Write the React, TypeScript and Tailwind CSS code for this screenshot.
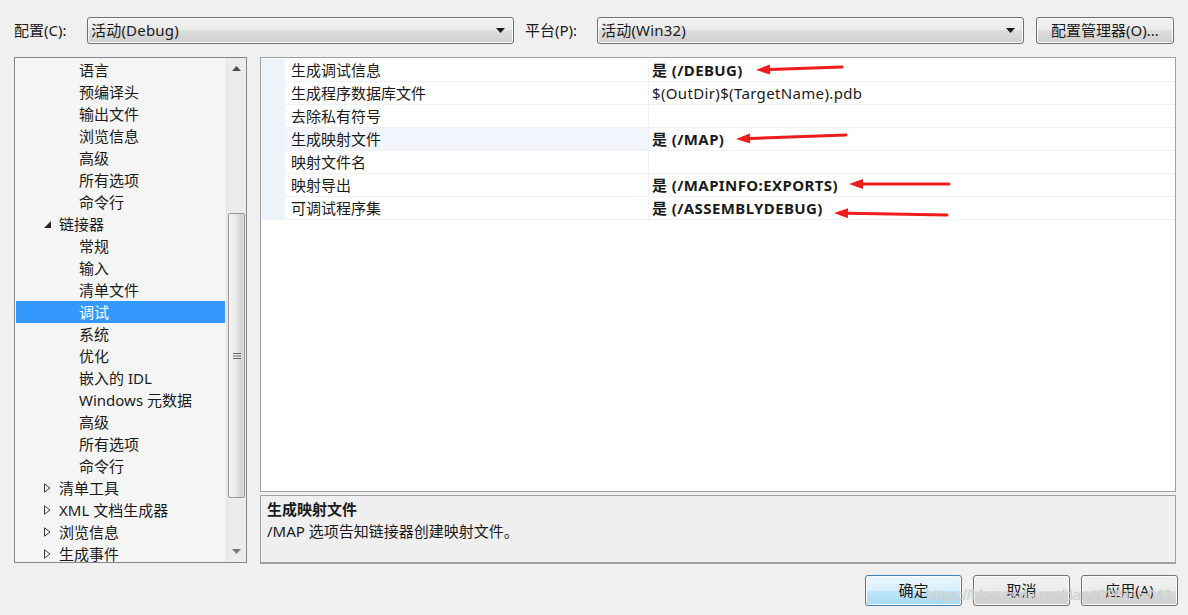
import React from "react";

type Node = { t: string; l: 1 | 2; s?: "open" | "closed"; sel?: boolean };

const tree: Node[] = [
  { t: "语言", l: 2 },
  { t: "预编译头", l: 2 },
  { t: "输出文件", l: 2 },
  { t: "浏览信息", l: 2 },
  { t: "高级", l: 2 },
  { t: "所有选项", l: 2 },
  { t: "命令行", l: 2 },
  { t: "链接器", l: 1, s: "open" },
  { t: "常规", l: 2 },
  { t: "输入", l: 2 },
  { t: "清单文件", l: 2 },
  { t: "调试", l: 2, sel: true },
  { t: "系统", l: 2 },
  { t: "优化", l: 2 },
  { t: "嵌入的 IDL", l: 2 },
  { t: "Windows 元数据", l: 2 },
  { t: "高级", l: 2 },
  { t: "所有选项", l: 2 },
  { t: "命令行", l: 2 },
  { t: "清单工具", l: 1, s: "closed" },
  { t: "XML 文档生成器", l: 1, s: "closed" },
  { t: "浏览信息", l: 1, s: "closed" },
  { t: "生成事件", l: 1, s: "closed" },
];

const rows: { name: string; value: string; bold?: boolean; hi?: boolean }[] = [
  { name: "生成调试信息", value: "是 (/DEBUG)", bold: true },
  { name: "生成程序数据库文件", value: "$(OutDir)$(TargetName).pdb" },
  { name: "去除私有符号", value: "" },
  { name: "生成映射文件", value: "是 (/MAP)", bold: true, hi: true },
  { name: "映射文件名", value: "" },
  { name: "映射导出", value: "是 (/MAPINFO:EXPORTS)", bold: true },
  { name: "可调试程序集", value: "是 (/ASSEMBLYDEBUG)", bold: true },
];

function Combo({ text }: { text: string }) {
  return (
    <div className="w-[427px] h-[27px] rounded-[3px] border border-[#707070] bg-[linear-gradient(to_bottom,#f2f2f2_0%,#ebebeb_50%,#dddddd_50%,#cfcfcf_100%)] shadow-[inset_0_0_0_1px_#fbfbfb] flex items-center pl-[3px] pr-[8px]">
      <span className="flex-1 tracking-[0.2px]">{text}</span>
      <svg width="9" height="5" viewBox="0 0 9 5">
        <path d="M0 0 L9 0 L4.5 5 Z" fill="#1a1a1a" />
      </svg>
    </div>
  );
}

function Btn({ text, def, w }: { text: string; def?: boolean; w: string }) {
  return (
    <div
      className={
        "h-[31px] rounded-[3px] border flex items-center justify-center shadow-[inset_0_0_0_1px_#fbfbfb] " +
        w +
        " " +
        (def
          ? "border-[#3c7fb1] bg-[linear-gradient(to_bottom,#eaf6fd_0%,#d9f0fc_50%,#bee6fd_50%,#a7d9f5_100%)]"
          : "border-[#707070] bg-[linear-gradient(to_bottom,#f2f2f2_0%,#ebebeb_50%,#dddddd_50%,#cfcfcf_100%)]")
      }
    >
      {text}
    </div>
  );
}

function Arrow({ x1, y1, x2, y2 }: { x1: number; y1: number; x2: number; y2: number }) {
  const dx = x2 - x1;
  const dy = y2 - y1;
  const len = Math.hypot(dx, dy);
  const ux = dx / len;
  const uy = dy / len;
  const hl = 14;
  const hw = 5;
  const bx = x2 - ux * hl;
  const by = y2 - uy * hl;
  const px = -uy;
  const py = ux;
  return (
    <g>
      <line x1={x1} y1={y1} x2={bx} y2={by} stroke="#ee1c1c" strokeWidth="3" strokeLinecap="round" />
      <path
        d={`M${x2} ${y2} L${bx + px * hw} ${by + py * hw} L${bx - px * hw} ${by - py * hw} Z`}
        fill="#ee1c1c"
      />
    </g>
  );
}

export default function App() {
  return (
    <div className="relative w-[1188px] h-[615px] overflow-hidden bg-[#f0f0f0] text-[15px] text-[#1a1a1a] font-['Noto_Sans','Noto_Sans_CJK_SC',sans-serif] leading-none">
      {/* top row */}
      <div className="flex items-center pt-[17px] pl-[14px]">
        <div className="w-[73px]">配置(C):</div>
        <Combo text="活动(Debug)" />
        <div className="w-[72px] ml-[11px]">平台(P):</div>
        <Combo text="活动(Win32)" />
        <div className="ml-[12px] w-[138px] h-[27px] rounded-[3px] border border-[#707070] bg-[linear-gradient(to_bottom,#f2f2f2_0%,#ebebeb_50%,#dddddd_50%,#cfcfcf_100%)] shadow-[inset_0_0_0_1px_#fbfbfb] flex items-center justify-center">
          配置管理器(O)...
        </div>
      </div>

      {/* main */}
      <div className="flex mt-[13px] pl-[14px]">
        {/* tree */}
        <div className="w-[233px] h-[506px] border border-[#828790] bg-[#f5f5f5] flex">
          <div className="flex-1 pt-[1px] overflow-hidden">
            {tree.map((n, i) => (
              <div
                key={i}
                className={
                  "mx-[1px] h-[22px] flex items-center " + (n.sel ? "bg-[#3399ff] text-white" : "")
                }
              >
                {n.l === 2 ? (
                  <div className="pl-[63px]">{n.t}</div>
                ) : (
                  <div className="flex items-center pl-[28px]">
                    <div className="w-[15px] flex items-center">
                      {n.s === "open" ? (
                        <svg width="7" height="7" viewBox="0 0 7 7">
                          <path d="M7 0 L7 7 L0 7 Z" fill="#262626" />
                        </svg>
                      ) : (
                        <svg width="7" height="10" viewBox="0 0 7 10">
                          <path d="M0.5 0.8 L6 5 L0.5 9.2 Z" fill="none" stroke="#3a3a3a" strokeWidth="1" />
                        </svg>
                      )}
                    </div>
                    <div>{n.t}</div>
                  </div>
                )}
              </div>
            ))}
          </div>
          {/* scrollbar */}
          <div className="w-[20px] flex flex-col bg-[#ececec] border-l border-[#e2e2e2]">
            <div className="h-[20px] flex items-center justify-center">
              <svg width="9" height="5" viewBox="0 0 9 5">
                <path d="M4.5 0 L9 5 L0 5 Z" fill="#4a4a4a" />
              </svg>
            </div>
            <div className="h-[135px]" />
            <div className="h-[285px] mx-[1px] rounded-[2px] border border-[#979797] bg-[linear-gradient(to_right,#f4f4f4_0%,#e9e9e9_45%,#d5d5d5_75%,#dcdcdc_100%)] flex items-center justify-center">
              <svg width="8" height="8" viewBox="0 0 8 8">
                <path d="M0 1.5 H8 M0 4 H8 M0 6.5 H8" stroke="#6a6a6a" strokeWidth="1" />
              </svg>
            </div>
            <div className="flex-1" />
            <div className="h-[22px] flex items-center justify-center">
              <svg width="9" height="5" viewBox="0 0 9 5">
                <path d="M0 0 L9 0 L4.5 5 Z" fill="#7a7a7a" />
              </svg>
            </div>
          </div>
        </div>

        {/* right side */}
        <div className="ml-[13px] flex flex-col">
          <div className="w-[916px] h-[435px] border border-[#a0a0a0] bg-white pt-[1px]">
            {rows.map((r, i) => (
              <div key={i} className="flex h-[23px]">
                <div className="w-[24px] bg-[#eef3fa]" />
                <div className="flex-1 flex border-b border-[#eef1f5]">
                  <div
                    className={
                      "w-[364px] border-r border-[#eef1f5] flex items-center pl-[6px] " +
                      (r.hi ? "bg-[#f2f5fb]" : "")
                    }
                  >
                    {r.name}
                  </div>
                  <div
                    className={
                      "flex-1 flex items-center pl-[3px] " +
                      (r.bold ? "font-bold tracking-[0.4px]" : "tracking-[0.35px]")
                    }
                  >
                    {r.value}
                  </div>
                </div>
              </div>
            ))}
          </div>
          <div className="mt-[3px] w-[916px] h-[69px] border border-[#a0a0a0] border-b-2 bg-[#efefef] pl-[6px] pt-[2px]">
            <div className="h-[22px] flex items-center font-bold">生成映射文件</div>
            <div className="h-[22px] flex items-center">/MAP 选项告知链接器创建映射文件。</div>
          </div>
        </div>
      </div>

      {/* bottom buttons */}
      <div className="flex mt-[11px] pl-[865px] gap-[11px]">
        <Btn text="确定" def w="w-[97px]" />
        <Btn text="取消" w="w-[97px]" />
        <Btn text="应用(A)" w="w-[97px]" />
      </div>

      {/* annotations overlay */}
      <svg className="absolute left-0 top-0 pointer-events-none" width="1188" height="615">
        <Arrow x1={842} y1={67} x2={756} y2={70} />
        <Arrow x1={846} y1={135} x2={736} y2={139} />
        <Arrow x1={949} y1={184} x2={849} y2={184} />
        <Arrow x1={947} y1={215} x2={834} y2={213} />
      </svg>

      {/* watermark */}
      <div className="absolute left-[926px] top-[587px] text-[15px] text-[#dcdcdc]/80 font-['Liberation_Sans',sans-serif] pointer-events-none [text-shadow:0_0_1px_#b8b8b8] whitespace-nowrap">
        https://blog.csdn.net/dan4020115043
      </div>
    </div>
  );
}
